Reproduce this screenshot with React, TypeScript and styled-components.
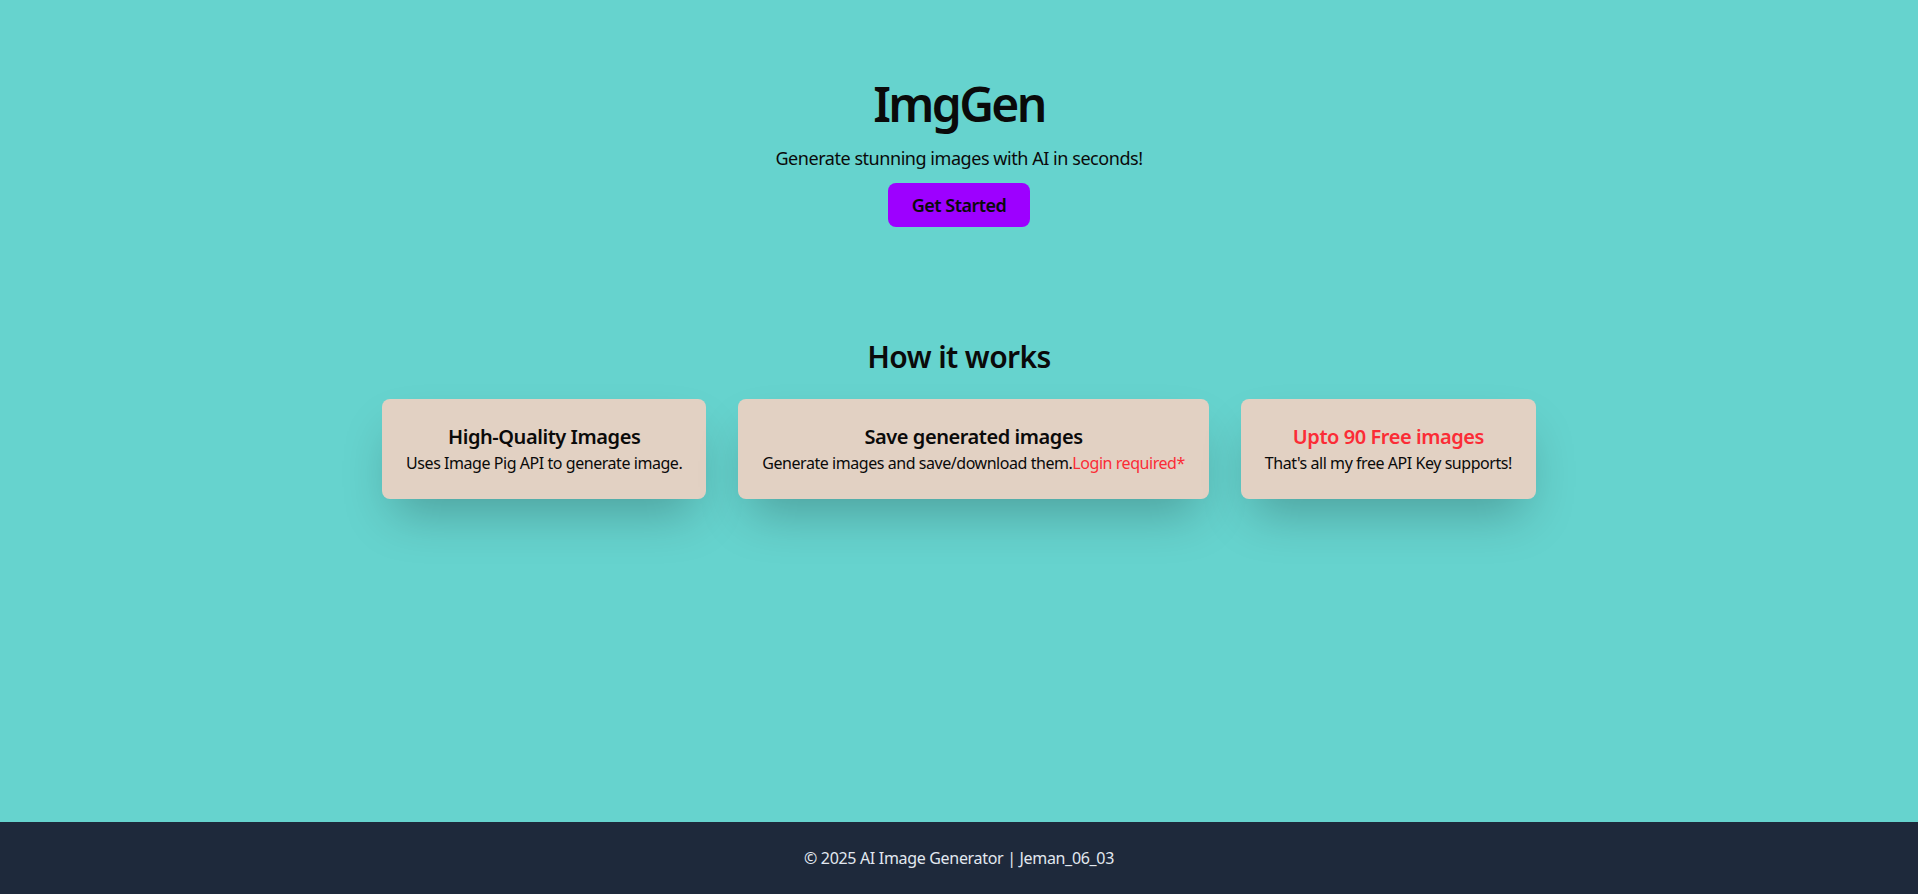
import React from 'react';
import styled, { createGlobalStyle } from 'styled-components';

const colors = {
  page: '#66d3ce',
  card: '#e2d1c3',
  purple: '#9d00ff',
  red: '#fb2c36',
  footer: '#1e293b',
  footerText: '#e2e8f0',
  text: '#0a0a0a',
};

const GlobalStyle = createGlobalStyle`
  * { box-sizing: border-box; }
  html, body { margin: 0; padding: 0; }
  body {
    font-family: 'Noto Sans', 'Open Sans', sans-serif;
    letter-spacing: -0.028em;
    background: ${colors.page};
    color: ${colors.text};
  }
`;

const Page = styled.div({
  minHeight: '100vh',
  display: 'flex',
  flexDirection: 'column',
});

const Main = styled.main({
  flex: 1,
});

const Hero = styled.section({
  display: 'flex',
  flexDirection: 'column',
  alignItems: 'center',
  padding: '80px 16px 0',
});

const Title = styled.h1({
  margin: '0 0 16px',
  fontSize: '48px',
  lineHeight: '48px',
  fontWeight: 600,
  letterSpacing: '-0.055em',
});

const Tagline = styled.p({
  margin: '0 0 11px',
  fontSize: '18px',
  lineHeight: '28px',
});

const StartButton = styled.button({
  cursor: 'pointer',
  padding: '8px 24px',
  border: 'none',
  borderRadius: '8px',
  backgroundColor: colors.purple,
  color: colors.text,
  fontFamily: 'inherit',
  fontSize: '18px',
  lineHeight: '28px',
  fontWeight: 600,
  letterSpacing: '-0.03em',
});

const Features = styled.section({
  display: 'flex',
  flexDirection: 'column',
  alignItems: 'center',
  paddingTop: '112px',
});

const SectionTitle = styled.h2({
  margin: '0 0 24px',
  fontSize: '30px',
  lineHeight: '36px',
  fontWeight: 600,
  letterSpacing: '-0.02em',
});

const CardRow = styled.div({
  display: 'flex',
  justifyContent: 'center',
  gap: '32px',
});

const Card = styled.div({
  padding: '24px',
  borderRadius: '8px',
  backgroundColor: colors.card,
  textAlign: 'center',
  boxShadow: '0 25px 50px -12px rgba(0, 0, 0, 0.25)',
});

const CardTitle = styled.h3<{ $accent?: boolean }>((props) => ({
  margin: 0,
  fontSize: '20px',
  lineHeight: '28px',
  fontWeight: 600,
  letterSpacing: '-0.022em',
  color: props.$accent ? colors.red : colors.text,
}));

const CardText = styled.p({
  margin: 0,
  fontSize: '16px',
  lineHeight: '24px',
});

const Warning = styled.span({
  color: colors.red,
});

const Footer = styled.footer({
  padding: '24px 16px',
  backgroundColor: colors.footer,
  color: colors.footerText,
  textAlign: 'center',
  fontSize: '16px',
  lineHeight: '24px',
  letterSpacing: '-0.02em',
});

export default function App() {
  return (
    <Page>
      <GlobalStyle />
      <Main>
        <Hero>
          <Title>ImgGen</Title>
          <Tagline>Generate stunning images with AI in seconds!</Tagline>
          <StartButton>Get Started</StartButton>
        </Hero>
        <Features>
          <SectionTitle>How it works</SectionTitle>
          <CardRow>
            <Card>
              <CardTitle>High-Quality Images</CardTitle>
              <CardText>Uses Image Pig API to generate image.</CardText>
            </Card>
            <Card>
              <CardTitle>Save generated images</CardTitle>
              <CardText>
                Generate images and save/download them.<Warning>Login required*</Warning>
              </CardText>
            </Card>
            <Card>
              <CardTitle $accent>Upto 90 Free images</CardTitle>
              <CardText>That's all my free API Key supports!</CardText>
            </Card>
          </CardRow>
        </Features>
      </Main>
      <Footer>© 2025 AI Image Generator | Jeman_06_03</Footer>
    </Page>
  );
}
